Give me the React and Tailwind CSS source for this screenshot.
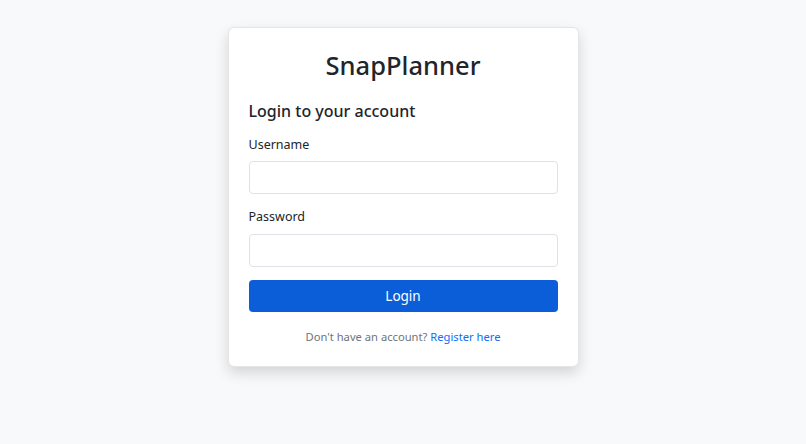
export default function App() {
  return (
    <div className="min-h-screen bg-[#f8f9fa] flex justify-center pt-[27px] font-['Noto_Sans',sans-serif] text-[#212529]">
      <div className="w-[351px] h-fit bg-white border border-black/10 rounded-[6px] shadow-[0_6px_14px_rgba(0,0,0,0.15)] p-[20px]">
        <h1 className="text-center text-[25.5px] leading-[34px] font-medium mb-[18px]">SnapPlanner</h1>
        <h2 className="text-[16px] leading-[22px] font-medium mb-[12px]">Login to your account</h2>
        <form onSubmit={(e) => e.preventDefault()}>
          <label className="block text-[12.5px] leading-[21px] mb-[6px]">Username</label>
          <input
            type="text"
            className="block w-full h-[33px] border border-[#dee2e6] rounded-[4px] px-3 text-sm outline-none"
          />
          <label className="block text-[12.5px] leading-[21px] mt-[12px] mb-[7px]">Password</label>
          <input
            type="password"
            className="block w-full h-[33px] border border-[#dee2e6] rounded-[4px] px-3 text-sm outline-none"
          />
          <button
            type="submit"
            className="block w-full h-[32px] mt-[13px] bg-[#0b5ed7] text-white text-[13.5px] rounded-[4px]"
          >
            Login
          </button>
        </form>
        <p className="text-center text-[11.2px] leading-[18px] mt-[16px] text-[#6c757d]">
          Don't have an account? <a href="#" className="text-[#0d6efd]">Register here</a>
        </p>
      </div>
    </div>
  );
}
